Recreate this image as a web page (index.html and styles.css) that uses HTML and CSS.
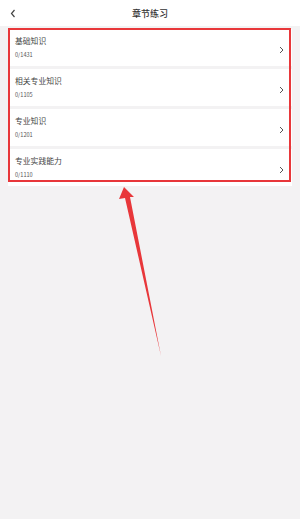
FILE: index.html
```html
<!doctype html>
<html lang="zh">
<head>
  <meta charset="UTF-8">
  <meta name="viewport" content="width=device-width, initial-scale=1.0">
  <title>章节练习</title>
  <link rel="stylesheet" href="styles.css">
</head>
<body>
  <div class="header">
    <svg class="back" width="6" height="9" viewBox="0 0 6 9">
      <path d="M4.5 1 L1.5 4.5 L4.5 8" fill="none" stroke="#444" stroke-width="1.2"/>
    </svg>
    <div class="title">章节练习</div>
  </div>

  <div class="list">
    <div class="item">
      <div class="info">
        <div class="name">基础知识</div>
        <div class="count">0/1431</div>
      </div>
      <svg class="arrow" width="5" height="8" viewBox="0 0 5 8"><path d="M1 1 L4 4 L1 7" fill="none" stroke="#555" stroke-width="1"/></svg>
    </div>
    <div class="item">
      <div class="info">
        <div class="name">相关专业知识</div>
        <div class="count">0/1105</div>
      </div>
      <svg class="arrow" width="5" height="8" viewBox="0 0 5 8"><path d="M1 1 L4 4 L1 7" fill="none" stroke="#555" stroke-width="1"/></svg>
    </div>
    <div class="item">
      <div class="info">
        <div class="name">专业知识</div>
        <div class="count">0/1201</div>
      </div>
      <svg class="arrow" width="5" height="8" viewBox="0 0 5 8"><path d="M1 1 L4 4 L1 7" fill="none" stroke="#555" stroke-width="1"/></svg>
    </div>
    <div class="item">
      <div class="info">
        <div class="name">专业实践能力</div>
        <div class="count">0/1110</div>
      </div>
      <svg class="arrow" width="5" height="8" viewBox="0 0 5 8"><path d="M1 1 L4 4 L1 7" fill="none" stroke="#555" stroke-width="1"/></svg>
    </div>
  </div>

  <!-- annotation drawn over the screenshot -->
  <div class="mark"></div>
  <svg class="pointer" width="300" height="519" viewBox="0 0 300 519">
    <polygon points="124,187 134,197 130,197 161,356 125,198 119,199" fill="#e8373a"/>
  </svg>
</body>
</html>
```

FILE: styles.css
```css
body {
  margin: 0;
  background: #f3f2f3;
  font-family: "Noto Sans CJK SC", "Noto Sans", sans-serif;
  color: #333;
  position: relative;
  height: 519px;
  overflow: hidden;
}

.header {
  height: 26px;
  background: #fff;
  display: flex;
  align-items: center;
  justify-content: center;
  position: relative;
}

.back {
  position: absolute;
  left: 10px;
  top: 9px;
}

.title {
  font-size: 9px;
  font-weight: 500;
  color: #333;
}

.list {
  padding: 3px 8px 0;
}

.item {
  height: 37px;
  margin-bottom: 3px;
  background: #fff;
  display: flex;
  align-items: center;
  padding: 0 8px 0 7px;
}

.info {
  flex: 1;
}

.name {
  font-size: 7.8px;
  line-height: 12px;
  color: #444;
}

.count {
  font-size: 5.6px;
  line-height: 10px;
  margin-top: 3px;
  color: #555;
}

.arrow {
  margin-top: 4px;
}

.mark {
  position: absolute;
  left: 8px;
  top: 28px;
  width: 279px;
  height: 150px;
  border: 2px solid #e8373a;
}

.pointer {
  position: absolute;
  left: 0;
  top: 0;
}
```
